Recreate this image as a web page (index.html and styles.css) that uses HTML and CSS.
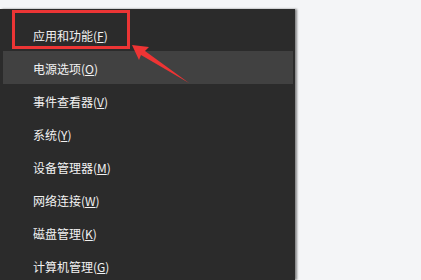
FILE: index.html
```html
<!DOCTYPE html>
<html lang="zh-CN">
<head>
<meta charset="utf-8">
<title>Win+X 菜单</title>
<link rel="stylesheet" href="styles.css">
</head>
<body>
<div class="screen">
  <div class="menu">
    <div class="item">应用和功能(<u>F</u>)</div>
    <div class="item active">电源选项(<u>O</u>)</div>
    <div class="item">事件查看器(<u>V</u>)</div>
    <div class="item">系统(<u>Y</u>)</div>
    <div class="item">设备管理器(<u>M</u>)</div>
    <div class="item">网络连接(<u>W</u>)</div>
    <div class="item">磁盘管理(<u>K</u>)</div>
    <div class="item">计算机管理(<u>G</u>)</div>
  </div>
  <div class="mark-box"></div>
  <svg class="mark-arrow" width="60" height="45" viewBox="0 0 60 45">
    <polygon points="0,0 17,2 13,6 57,38 9,10 7,15" fill="#ee3434"/>
  </svg>
</div>
</body>
</html>
```
FILE: styles.css
```css
html, body {
  margin: 0;
  padding: 0;
}
body {
  background: #f4f5f7;
  overflow: hidden;
  font-family: "Noto Sans CJK SC", "Noto Sans", sans-serif;
}
.screen {
  position: relative;
  width: 421px;
  height: 280px;
  padding-top: 9px;
  box-sizing: border-box;
}
.menu {
  width: 295px;
  height: 271px;
  background: #2b2b2b;
  box-shadow: 2px 0 2px rgba(0, 0, 0, 0.45);
  padding-top: 9px;
  box-sizing: border-box;
  overflow: hidden;
}
.item {
  height: 33px;
  line-height: 33px;
  padding-left: 33px;
  font-size: 12px;
  color: #f2f2f2;
  padding-top: 1px;
  box-sizing: border-box;
}
.item u {
  text-decoration: underline;
  text-underline-offset: 1px;
}
.item.active {
  background: #414141;
  margin-left: 3px;
  margin-right: 2px;
  padding-left: 30px;
}
.mark-box {
  position: absolute;
  left: 12px;
  top: 10px;
  width: 118px;
  height: 39px;
  border: 3px solid #ec3535;
  box-sizing: border-box;
}
.mark-arrow {
  position: absolute;
  left: 132px;
  top: 45px;
}
```
